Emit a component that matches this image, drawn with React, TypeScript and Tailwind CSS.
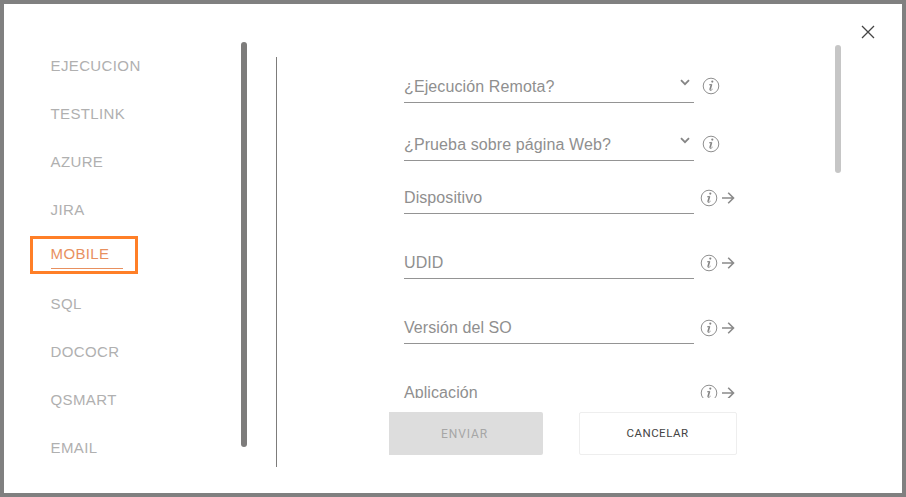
import { useState } from "react";

import cx from "clsx";

const SECTIONS = [
  "EJECUCION",
  "TESTLINK",
  "AZURE",
  "JIRA",
  "MOBILE",
  "SQL",
  "DOCOCR",
  "QSMART",
  "EMAIL",
];

const SELECTS = ["¿Ejecución Remota?", "¿Prueba sobre página Web?"];

const FIELDS = ["Dispositivo", "UDID", "Versión del SO", "Aplicación"];

const InfoIcon = () => (
  <svg width="18" height="18" viewBox="0 0 18 18" fill="none" className="shrink-0">
    <circle cx="9" cy="9" r="7.8" stroke="#8f8f8f" strokeWidth="1" />
    <circle cx="10.3" cy="4.6" r="1.1" fill="#858585" />
    <path d="M7 7.9 9.4 7.3" stroke="#858585" strokeWidth="0.9" />
    <path d="M9.5 7.2 8.1 12.6" stroke="#858585" strokeWidth="1.7" />
    <path d="M7.8 12.4C7.5 14 9 13.7 10.6 12.1" stroke="#858585" strokeWidth="0.9" />
  </svg>
);

const ArrowIcon = () => (
  <svg width="14" height="14" viewBox="0 0 14 14" fill="none" className="shrink-0">
    <path d="M1 7H12.3M7.2 1.7 12.5 7 7.2 12.3" stroke="#8a8a8a" strokeWidth="1.6" />
  </svg>
);

const ChevronIcon = () => (
  <svg width="10" height="7" viewBox="0 0 10 7" fill="none">
    <path d="M1 1.2 5 5.2 9 1.2" stroke="#858585" strokeWidth="1.8" />
  </svg>
);

export default function App() {
  const [active, setActive] = useState("MOBILE");

  return (
    <div className="flex h-[497px] w-[906px] overflow-hidden border-4 border-[#808080] bg-white font-['Liberation_Sans',sans-serif]">
      <nav className="flex w-[237px] flex-col pt-[38px] pl-[26px]">
        {SECTIONS.map((name) => (
          <button
            key={name}
            onClick={() => setActive(name)}
            className={cx(
              "flex text-left text-[15px] tracking-[0.38px]",
              name === active
                ? "mt-0.5 mb-1.5 h-[38px] w-[108px] shrink-0 border-3 border-[#ff7f27] pt-1 pl-[18px] text-[#e8905f]"
                : "h-12 shrink-0 items-center pl-[20.5px] text-[#b0b0b0]"
            )}
          >
            <span
              className={cx(
                name === active &&
                  "h-[26px] w-[72px] border-b border-[#e8905f] -indent-[0.5px]"
              )}
            >
              {name}
            </span>
          </button>
        ))}
      </nav>
      <div className="mt-[38px] h-[405px] w-1.5 shrink-0 rounded-full bg-[#7d7c7b]" />
      <div className="mt-[53px] ml-[29px] h-[410px] w-px shrink-0 bg-[#7d7c7b]" />

      <main className="ml-[112px] flex w-[349px] shrink-0 flex-col">
        <div className="flex h-[394px] flex-col overflow-hidden pt-[41px] pl-[15px] text-base text-[#8f8f8f]">
          {SELECTS.map((label) => (
            <div key={label} className="flex h-[58px] shrink-0 items-end">
              <div className="flex h-8 w-[290px] justify-between border-b border-[#949494] pt-1">
                <span className="tracking-[0.11px]">{label}</span>
                <span className="pt-1 pr-1">
                  <ChevronIcon />
                </span>
              </div>
              <div className="mb-2 ml-2">
                <InfoIcon />
              </div>
            </div>
          ))}
          <div className="-mt-3 flex shrink-0 flex-col">
            {FIELDS.map((label) => (
              <div key={label} className="flex h-[65px] shrink-0 items-end">
                <div className="h-7 w-[290px] border-b border-[#949494] tracking-[0.08px]">
                  {label}
                </div>
                <div className="mb-[7px] ml-1.5 flex items-center gap-[3px]">
                  <InfoIcon />
                  <ArrowIcon />
                </div>
              </div>
            ))}
          </div>
        </div>
        <div className="mt-3.5 flex gap-9 font-['Roboto',sans-serif]">
          <button
            disabled
            className="h-[43px] w-[154px] rounded-r-xs bg-[#dddddd] pr-[3px] text-xs tracking-[0.9px] text-[#a6a6a6]"
          >
            ENVIAR
          </button>
          <button className="h-[43px] w-[158px] rounded-xs border border-[#eeeeee] pr-px text-[11.5px] tracking-[0.5px] text-[#444444]">
            CANCELAR
          </button>
        </div>
      </main>

      <div className="mt-[41px] ml-[97px] h-32 w-1.5 shrink-0 rounded-full bg-[#c6c6c6]" />
      <button aria-label="Cerrar" className="mt-[21px] ml-5 h-3.5 w-3.5 shrink-0">
        <svg width="14" height="14" viewBox="0 0 14 14" fill="none">
          <path d="M1 1 13 13M13 1 1 13" stroke="#444444" strokeWidth="1.3" />
        </svg>
      </button>
    </div>
  );
}
